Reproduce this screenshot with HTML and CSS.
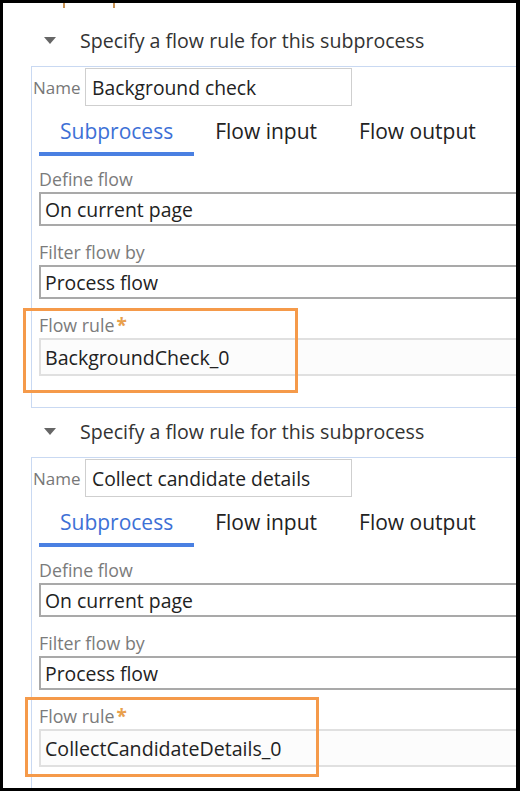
FILE: index.html
```html
<!DOCTYPE html>
<html>
<head>
<meta charset="utf-8">
<link rel="stylesheet" href="styles.css">
</head>
<body>
<div class="frame">
  <div class="ticks"><span class="tick t1"></span><span class="tick t2"></span></div>

  <section class="sub">
    <div class="sub-head"><span class="caret"></span><span class="sub-title">Specify a flow rule for this subprocess</span></div>
    <div class="panel">
      <div class="name-row"><span class="name-label">Name</span><div class="name-input">Background check</div></div>
      <div class="tabs"><div class="tab active">Subprocess</div><div class="tab">Flow input</div><div class="tab">Flow output</div></div>
      <div class="fields">
        <div class="field first"><div class="field-label">Define flow</div><div class="select">On current page</div></div>
        <div class="field"><div class="field-label">Filter flow by</div><div class="select">Process flow</div></div>
        <div class="field field-flow"><div class="highlight hl-1"></div><div class="field-label">Flow rule<span class="req">*</span></div><div class="text-input">BackgroundCheck_0</div></div>
      </div>
    </div>
  </section>

  <section class="sub">
    <div class="sub-head"><span class="caret"></span><span class="sub-title">Specify a flow rule for this subprocess</span></div>
    <div class="panel">
      <div class="name-row"><span class="name-label">Name</span><div class="name-input">Collect candidate details</div></div>
      <div class="tabs"><div class="tab active">Subprocess</div><div class="tab">Flow input</div><div class="tab">Flow output</div></div>
      <div class="fields">
        <div class="field first"><div class="field-label">Define flow</div><div class="select">On current page</div></div>
        <div class="field"><div class="field-label">Filter flow by</div><div class="select">Process flow</div></div>
        <div class="field field-flow"><div class="highlight hl-2"></div><div class="field-label">Flow rule<span class="req">*</span></div><div class="text-input">CollectCandidateDetails_0</div></div>
      </div>
    </div>
  </section>
</div>
</body>
</html>
```

FILE: styles.css
```css
html, body {
  margin: 0;
  padding: 0;
  background: #000;
}
body {
  font-family: "Open Sans", "Noto Sans", sans-serif;
}
.frame {
  margin: 3px 4px 0 3px;
  height: 785px;
  background: #fff;
  overflow: hidden;
}
.ticks {
  height: 14px;
  display: flex;
}
.tick {
  width: 2px;
  height: 5px;
  background: #c99353;
}
.t1 { margin-left: 60px; }
.t2 { margin-left: 48px; }

.sub-head {
  display: flex;
  align-items: flex-start;
  padding: 11px 0 12px 41px;
}
.caret {
  width: 0;
  height: 0;
  border-left: 6px solid transparent;
  border-right: 6px solid transparent;
  border-top: 7px solid #666;
  margin-top: 9px;
  margin-right: 24px;
}
.sub-title {
  font-size: 19.6px;
  line-height: 26px;
  color: #333;
  white-space: nowrap;
}

.panel {
  margin-left: 28px;
  margin-right: -30px;
  border: 1px solid #c9d9f2;
  padding: 1px 0 31px 0;
}
.name-row {
  display: flex;
  align-items: center;
  height: 38px;
  padding-left: 1px;
}
.name-label {
  width: 52px;
  font-size: 17px;
  color: #777;
}
.name-input {
  width: 267px;
  height: 38px;
  box-sizing: border-box;
  border: 1px solid #cfcfcf;
  padding-left: 6px;
  display: flex;
  align-items: center;
  font-size: 19.3px;
  color: #222;
  white-space: nowrap;
}
.tabs {
  display: flex;
  margin-left: 7px;
  padding-top: 11px;
}
.tab {
  font-size: 21px;
  line-height: 28px;
  padding: 0 21px 7px;
  border-bottom: 4px solid transparent;
  color: #222;
  white-space: nowrap;
}
.tab.active {
  color: #3d70d6;
  border-bottom-color: #4a80e2;
}
.fields {
  padding-left: 7px;
}
.field {
  margin-top: 14px;
}
.field.first {
  margin-top: 11px;
}
.field-label {
  font-size: 17.8px;
  line-height: 25px;
  color: #7b7b7b;
  white-space: nowrap;
}
.req {
  color: #e8a04c;
  font-weight: 700;
  font-size: 19px;
  margin-left: 2px;
}
.select {
  height: 34px;
  box-sizing: border-box;
  border: 2px solid #a9a9a9;
  padding-left: 4px;
  display: flex;
  align-items: center;
  font-size: 19.4px;
  color: #222;
  white-space: nowrap;
}
.text-input {
  height: 38px;
  box-sizing: border-box;
  border: 2px solid #e0e0e0;
  background: #fcfcfc;
  padding-left: 4px;
  display: flex;
  align-items: center;
  font-size: 19.6px;
  color: #222;
  white-space: nowrap;
}
.field-flow {
  position: relative;
}
.highlight {
  position: absolute;
  box-sizing: border-box;
  border: 3px solid #f59a4a;
  pointer-events: none;
}
.hl-1 {
  left: -16px;
  top: -5px;
  width: 275px;
  height: 85px;
}
.hl-2 {
  left: -14px;
  top: -7px;
  width: 294px;
  height: 80px;
}
```
